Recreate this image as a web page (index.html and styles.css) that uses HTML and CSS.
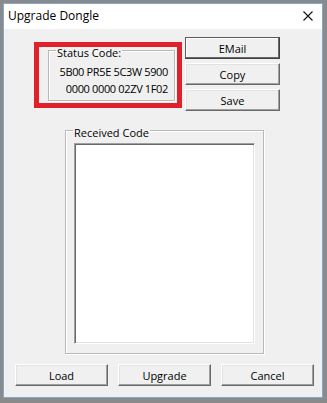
FILE: index.html
```html
<!DOCTYPE html>
<html>
<head>
<meta charset="utf-8">
<link rel="stylesheet" href="styles.css">
</head>
<body>
<div class="window">
  <div class="titlebar">
    <span class="title">Upgrade Dongle</span>
    <svg class="close" width="10" height="10" viewBox="0 0 10 10"><path d="M0.5 0.5 L9.5 9.5 M9.5 0.5 L0.5 9.5" stroke="#111" stroke-width="1.1" fill="none"/></svg>
  </div>
  <div class="client">
    <div class="top">
      <div class="highlight">
        <fieldset class="group status">
          <legend>Status Code:</legend>
          <div class="code">5B00 PR5E 5C3W 5900<br>0000 0000 02ZV 1F02</div>
        </fieldset>
      </div>
      <div class="side-buttons">
        <button class="btn side default">EMail</button>
        <button class="btn side">Copy</button>
        <button class="btn side">Save</button>
      </div>
    </div>
    <fieldset class="group received">
      <legend>Received Code</legend>
      <div class="textbox"></div>
    </fieldset>
    <div class="bottom-buttons">
      <button class="btn wide">Load</button>
      <button class="btn wide">Upgrade</button>
      <button class="btn wide">Cancel</button>
    </div>
  </div>
</div>
</body>
</html>
```
FILE: styles.css
```css
html, body {
  margin: 0;
  padding: 0;
}
body {
  background: #8a8a8a;
  width: 327px;
  height: 403px;
  overflow: hidden;
  font-family: "Open Sans", "DejaVu Sans", sans-serif;
  font-size: 11px;
  color: #000;
}
.window {
  margin: 3px 3px 0 3px;
  width: 320px;
  height: 395px;
  box-sizing: border-box;
  border: 1px solid #7fa8d4;
  background: #f0f0f0;
  display: flex;
  flex-direction: column;
}
.titlebar {
  height: 25px;
  flex: none;
  background: #fff;
  display: flex;
  align-items: center;
  justify-content: space-between;
  padding: 0 9px 0 4px;
}
.title {
  font-size: 12px;
  line-height: 16px;
  margin-top: -1px;
}
.close {
  display: block;
  margin-top: -1px;
}
.client {
  flex: 1;
  display: flex;
  flex-direction: column;
}
.top {
  display: flex;
  align-items: flex-start;
  gap: 3px;
  padding: 8px 0 0 30px;
}
.highlight {
  margin-top: 5px;
  width: 148px;
  height: 66px;
  box-sizing: border-box;
  border: 5px solid #e0202b;
  padding: 0 3px 0 9px;
}
.group {
  margin: 0;
  padding: 0;
  border: 1px solid #b9b9b9;
  box-shadow: inset 1px 1px 0 #fff, 1px 1px 0 #fff;
  min-width: 0;
}
.group legend {
  padding: 5px 1px 0 1px;
  margin-left: 7px;
  line-height: 13px;
}
.status {
  margin-top: -6px;
  width: 127px;
  box-sizing: border-box;
  padding: 4px 0 3px 0;
}
.code {
  text-align: right;
  line-height: 17px;
  letter-spacing: -0.35px;
  padding-right: 6px;
}
.side-buttons {
  display: flex;
  flex-direction: column;
  gap: 4px;
}
.btn {
  font-family: inherit;
  font-size: 11px;
  color: #000;
  height: 22px;
  box-sizing: border-box;
  background: #f0f0f0;
  border: 1px solid;
  border-color: #fff #696969 #696969 #fff;
  box-shadow: inset -1px -1px 0 #a0a0a0, inset 1px 1px 0 #e3e3e3;
  padding: 0;
  margin: 0;
}
.side {
  width: 95px;
}
.default {
  border-color: #5a5a5a #404040 #404040 #5a5a5a;
  box-shadow: inset -1px -1px 0 #696969, inset 1px 1px 0 #fff;
}
.received {
  margin: 10px 0 0 61px;
  width: 199px;
  box-sizing: border-box;
  padding: 4px 0 9px 0;
}
.textbox {
  margin: 0 8px;
  width: 181px;
  height: 201px;
  box-sizing: border-box;
  background: #fff;
  border: 1px solid;
  border-color: #a0a0a0 #fff #fff #a0a0a0;
  box-shadow: inset 1px 1px 0 #696969, inset -1px -1px 0 #e3e3e3;
}
.bottom-buttons {
  display: flex;
  gap: 10px;
  padding: 10px 0 0 11px;
}
.wide {
  width: 93px;
}
```
